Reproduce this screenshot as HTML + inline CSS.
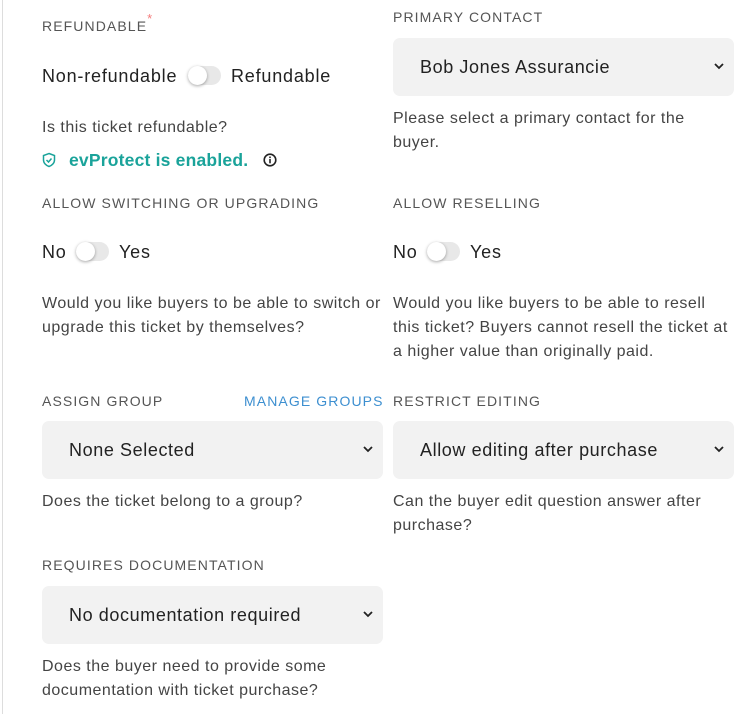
<!DOCTYPE html>
<html><head><style>
*{margin:0;padding:0;box-sizing:border-box}
body{width:748px;height:714px;background:#fff;font-family:"Liberation Sans",sans-serif;position:relative;overflow:hidden;color:#222}
.bl{position:absolute;left:2px;top:0;width:1px;height:714px;background:#ddd}
.a{position:absolute;white-space:nowrap}
.lab{font-size:14px;letter-spacing:1.1px;color:#555;}
.txt{font-size:18px;letter-spacing:0.8px;color:#222}
.help{font-size:16px;letter-spacing:0.5px;color:#444;line-height:24px;white-space:normal}
.tg{position:absolute;width:33px;height:19px;border-radius:10px;background:#e8e8e8}
.tg:after{content:"";position:absolute;left:0;top:0;width:19px;height:19px;border-radius:50%;background:#fff;box-shadow:0 1px 3px rgba(0,0,0,.35)}
.sel{position:absolute;height:58px;background:#f2f2f2;border-radius:7px;font-size:18px;letter-spacing:0.6px;color:#222;padding-left:27px;line-height:58px}
.sel svg{position:absolute;right:10px;top:24px}
</style></head><body>
<div class="bl"></div>

<div class="a lab" style="left:42px;top:18px">REFUNDABLE<span style="color:#f47b7b;font-size:13px;position:relative;top:-8px;letter-spacing:0">*</span></div>
<div class="a txt" style="left:42px;top:66px">Non-refundable</div>
<div class="tg" style="left:188px;top:66px"></div>
<div class="a txt" style="left:231px;top:66px">Refundable</div>
<div class="a help" style="left:42px;top:116px">Is this ticket refundable?</div>
<svg class="a" style="left:42px;top:152px" width="14" height="16" viewBox="0 0 14 16"><path d="M7 1.5L12.5 3.5V8c0 3-2.5 5.5-5.5 6.5C4 13.5 1.5 11 1.5 8V3.5Z" fill="none" stroke="#1aa39a" stroke-width="1.5"/><path d="M4.5 8l2 2 3-3.5" fill="none" stroke="#1aa39a" stroke-width="1.5"/></svg>
<div class="a" style="left:69px;top:150px;font-size:17.5px;letter-spacing:0.2px;font-weight:bold;color:#1aa39a">evProtect is enabled.</div>
<svg class="a" style="left:263px;top:153px" width="14" height="14" viewBox="0 0 14 14"><circle cx="7" cy="7" r="5.8" fill="none" stroke="#222" stroke-width="1.6"/><rect x="6.2" y="6" width="1.6" height="4.3" fill="#222"/><rect x="6.2" y="3.5" width="1.6" height="1.6" fill="#222"/></svg>

<div class="a lab" style="left:42px;top:195px">ALLOW SWITCHING OR UPGRADING</div>
<div class="a txt" style="left:42px;top:242px">No</div>
<div class="tg" style="left:76px;top:242px"></div>
<div class="a txt" style="left:119px;top:242px">Yes</div>
<div class="a help" style="left:42px;top:292px;width:345px">Would you like buyers to be able to switch or upgrade this ticket by themselves?</div>

<div class="a lab" style="left:42px;top:393px">ASSIGN GROUP</div>
<div class="a lab" style="left:244px;top:393px;color:#3d8fd0">MANAGE GROUPS</div>
<div class="sel" style="left:42px;top:421px;width:341px">None Selected<svg width="10" height="8" viewBox="0 0 10 8"><path d="M1 2l4 4 4-4" fill="none" stroke="#222" stroke-width="1.8"/></svg></div>
<div class="a help" style="left:42px;top:490px">Does the ticket belong to a group?</div>

<div class="a lab" style="left:42px;top:557px">REQUIRES DOCUMENTATION</div>
<div class="sel" style="left:42px;top:586px;width:341px">No documentation required<svg width="10" height="8" viewBox="0 0 10 8"><path d="M1 2l4 4 4-4" fill="none" stroke="#222" stroke-width="1.8"/></svg></div>
<div class="a help" style="left:42px;top:655px;width:330px">Does the buyer need to provide some documentation with ticket purchase?</div>

<div class="a lab" style="left:393px;top:9px">PRIMARY CONTACT</div>
<div class="sel" style="left:393px;top:38px;width:341px">Bob Jones Assurancie<svg width="10" height="8" viewBox="0 0 10 8"><path d="M1 2l4 4 4-4" fill="none" stroke="#222" stroke-width="1.8"/></svg></div>
<div class="a help" style="left:393px;top:107px;width:330px">Please select a primary contact for the buyer.</div>

<div class="a lab" style="left:393px;top:195px">ALLOW RESELLING</div>
<div class="a txt" style="left:393px;top:242px">No</div>
<div class="tg" style="left:427px;top:242px"></div>
<div class="a txt" style="left:470px;top:242px">Yes</div>
<div class="a help" style="left:393px;top:292px;width:342px">Would you like buyers to be able to resell this ticket? Buyers cannot resell the ticket at a higher value than originally paid.</div>

<div class="a lab" style="left:393px;top:393px">RESTRICT EDITING</div>
<div class="sel" style="left:393px;top:421px;width:341px">Allow editing after purchase<svg width="10" height="8" viewBox="0 0 10 8"><path d="M1 2l4 4 4-4" fill="none" stroke="#222" stroke-width="1.8"/></svg></div>
<div class="a help" style="left:393px;top:490px;width:330px">Can the buyer edit question answer after purchase?</div>
</body></html>
